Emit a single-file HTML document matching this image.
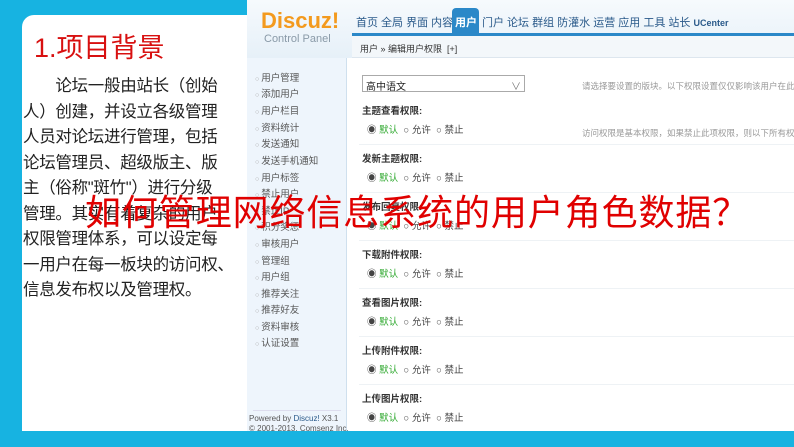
<!DOCTYPE html>
<html><head><meta charset="utf-8"><style>
*{margin:0;padding:0;box-sizing:border-box}
body{width:794px;height:447px;overflow:hidden;background:#17b3e1;position:relative;font-family:"Liberation Sans","Noto Sans CJK SC",sans-serif}
.a{position:absolute;white-space:nowrap}
#card{position:absolute;left:22px;top:15px;width:240px;height:416px;background:#fff;border-top-left-radius:12px}
#title{left:34px;top:26px;font-size:27px;color:#d81010}
#body{left:23px;top:74px;font-size:16.5px;line-height:25.5px;color:#222;letter-spacing:-0.3px}
#shot{position:absolute;left:247px;top:0;width:547px;height:431px;background:#fff;overflow:hidden}
#hdr{position:absolute;left:0;top:0;width:547px;height:58px;background:linear-gradient(#f6fafd,#e6f0f8)}
#side{position:absolute;left:0;top:58px;width:100px;height:373px;background:#eef5fc;border-right:1px solid #cfe0ee}
.nav{font-size:11px;color:#2a5a8a;top:14px}
.si{font-size:9.5px;color:#555;left:8px}
.si:before{content:"○ ";color:#aaa;font-size:7px}
.lb{font-size:9.5px;font-weight:bold;color:#333;left:115px}
.rd{font-size:9.5px;color:#444;left:120px}
.rd b{color:#3a3;font-weight:normal}
.sep{position:absolute;left:112px;width:435px;height:1px;background:#eef2f5}
#big{left:85px;top:184px;font-size:36px;color:#e00000;letter-spacing:0.9px}
</style></head><body>
<div id="card"></div>
<div class="a" id="title">1.项目背景</div>
<div class="a" id="body">&emsp;&emsp;论坛一般由站长（创始<br>人）创建，并设立各级管理<br>人员对论坛进行管理，包括<br>论坛管理员、超级版主、版<br>主（俗称"斑竹"）进行分级<br>管理。其实有着复杂的用户<br>权限管理体系，可以设定每<br>一用户在每一板块的访问权、<br>信息发布权以及管理权。</div>
<div id="shot">
<div id="hdr"></div>
<div class="a" style="left:14px;top:8px;font-size:22px;font-weight:bold;color:#f39a1e">Discuz!</div>
<div class="a" style="left:17px;top:33px;font-size:11px;color:#8a9aa8">Control Panel</div>
<div style="position:absolute;left:105px;top:33px;width:442px;height:3px;background:#2b88c8"></div>
<div class="a nav" style="left:109px">首页 全局 界面 内容</div>
<div style="position:absolute;left:205px;top:8px;width:27px;height:27px;background:#2b88c8;border-radius:4px 4px 0 0"></div>
<div class="a nav" style="left:208px;color:#fff;font-weight:bold">用户</div>
<div class="a nav" style="left:235px">门户 论坛 群组 防灌水 运营 应用 工具 站长 <b style="font-size:9px">UCenter</b></div>
<div style="position:absolute;left:105px;top:36px;width:442px;height:22px;background:#f3f7fa;border-bottom:1px solid #dde6ee"></div>
<div class="a" style="left:113px;top:42px;font-size:9px;color:#333">用户 » 编辑用户权限 &nbsp;[+]</div>
<div id="side"></div>
<div class="a si" style="top:70px">用户管理</div><div class="a si" style="top:86px">添加用户</div><div class="a si" style="top:103px">用户栏目</div><div class="a si" style="top:120px">资料统计</div><div class="a si" style="top:136px">发送通知</div><div class="a si" style="top:153px">发送手机通知</div><div class="a si" style="top:170px">用户标签</div><div class="a si" style="top:186px">禁止用户</div><div class="a si" style="top:203px">禁止IP</div><div class="a si" style="top:219px">积分奖惩</div><div class="a si" style="top:236px">审核用户</div><div class="a si" style="top:253px">管理组</div><div class="a si" style="top:269px">用户组</div><div class="a si" style="top:286px">推荐关注</div><div class="a si" style="top:302px">推荐好友</div><div class="a si" style="top:319px">资料审核</div><div class="a si" style="top:335px">认证设置</div>
<div style="position:absolute;left:6px;top:410px;width:88px;height:1px;background:#dde"></div>
<div class="a" style="left:2px;top:414px;font-size:8px;color:#555">Powered by <span style="color:#2a5a8a">Discuz!</span> X3.1</div>
<div class="a" style="left:2px;top:424px;font-size:8px;color:#555">© 2001-2013, Comsenz Inc.</div>
<div style="position:absolute;left:115px;top:75px;width:163px;height:17px;border:1px solid #aaa;font-size:10px;padding:2px 3px;color:#222">高中语文<span style="float:right;color:#777">∨</span></div>
<div class="a" style="left:335px;top:80px;font-size:8.5px;color:#999">请选择要设置的版块。以下权限设置仅仅影响该用户在此版</div>
<div class="a" style="left:335px;top:127px;font-size:8.5px;color:#999">访问权限是基本权限，如果禁止此项权限，则以下所有权限</div>
<div class="a lb" style="top:103px">主题查看权限:</div><div class="a rd" style="top:122px">◉ <b>默认</b> &nbsp;○ 允许 &nbsp;○ 禁止</div>
<div class="sep" style="top:144px"></div>
<div class="a lb" style="top:151px">发新主题权限:</div><div class="a rd" style="top:170px">◉ <b>默认</b> &nbsp;○ 允许 &nbsp;○ 禁止</div>
<div class="sep" style="top:192px"></div>
<div class="a lb" style="top:199px">发布回复权限:</div><div class="a rd" style="top:218px">◉ <b>默认</b> &nbsp;○ 允许 &nbsp;○ 禁止</div>
<div class="sep" style="top:240px"></div>
<div class="a lb" style="top:247px">下载附件权限:</div><div class="a rd" style="top:266px">◉ <b>默认</b> &nbsp;○ 允许 &nbsp;○ 禁止</div>
<div class="sep" style="top:288px"></div>
<div class="a lb" style="top:295px">查看图片权限:</div><div class="a rd" style="top:314px">◉ <b>默认</b> &nbsp;○ 允许 &nbsp;○ 禁止</div>
<div class="sep" style="top:336px"></div>
<div class="a lb" style="top:343px">上传附件权限:</div><div class="a rd" style="top:362px">◉ <b>默认</b> &nbsp;○ 允许 &nbsp;○ 禁止</div>
<div class="sep" style="top:384px"></div>
<div class="a lb" style="top:391px">上传图片权限:</div><div class="a rd" style="top:410px">◉ <b>默认</b> &nbsp;○ 允许 &nbsp;○ 禁止</div>
</div>
<div class="a" id="big">如何管理网络信息系统的用户角色数据？</div>
</body></html>
